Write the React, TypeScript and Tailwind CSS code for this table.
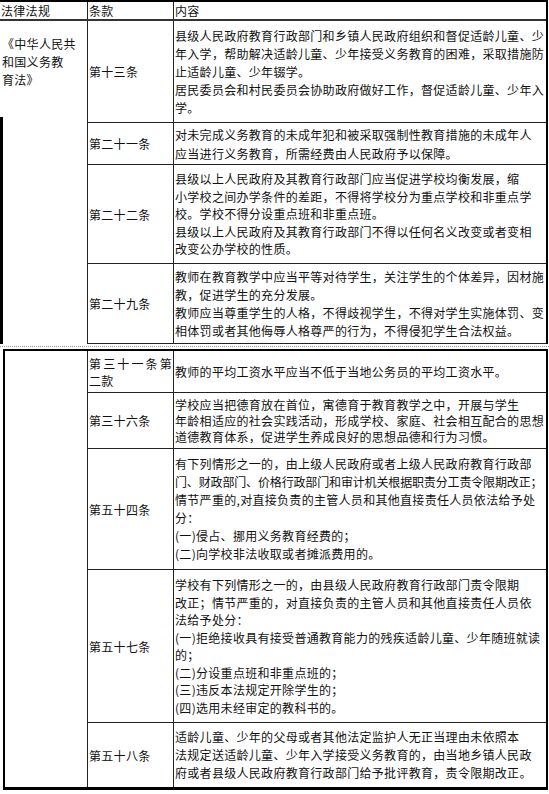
import React from "react";

type Line = string | { t: string; tight: true };

type RowData = {
  art: React.ReactNode;
  lines: Line[];
  h: string;
  lh: string;
  last?: boolean;
};

const topRows: RowData[] = [
  {
    art: "第十三条",
    h: "h-[102px]",
    lh: "leading-[18px]",
    lines: [
      "县级人民政府教育行政部门和乡镇人民政府组织和督促适龄儿童、少",
      "年入学，帮助解决适龄儿童、少年接受义务教育的困难，采取措施防",
      "止适龄儿童、少年辍学。",
      "居民委员会和村民委员会协助政府做好工作，督促适龄儿童、少年入",
      "学。",
    ],
  },
  {
    art: "第二十一条",
    h: "h-[42px]",
    lh: "leading-[19px]",
    lines: [
      "对未完成义务教育的未成年犯和被采取强制性教育措施的未成年人",
      "应当进行义务教育，所需经费由人民政府予以保障。",
    ],
  },
  {
    art: "第二十二条",
    h: "h-[99px]",
    lh: "leading-[17.5px]",
    lines: [
      "县级以上人民政府及其教育行政部门应当促进学校均衡发展，缩",
      "小学校之间办学条件的差距，不得将学校分为重点学校和非重点学",
      "校。学校不得分设重点班和非重点班。",
      "县级以上人民政府及其教育行政部门不得以任何名义改变或者变相",
      "改变公办学校的性质。",
    ],
  },
  {
    art: "第二十九条",
    h: "h-[80px]",
    lh: "leading-[18px]",
    lines: [
      "教师在教育教学中应当平等对待学生，关注学生的个体差异，因材施",
      "教，促进学生的充分发展。",
      "教师应当尊重学生的人格，不得歧视学生，不得对学生实施体罚、变",
      "相体罚或者其他侮辱人格尊严的行为，不得侵犯学生合法权益。",
    ],
  },
];

const bottomRows: RowData[] = [
  {
    art: (
      <div className="w-full">
        <div className="[text-align:justify] [text-align-last:justify] pr-[1px]">第三十一条第</div>
        <div>二款</div>
      </div>
    ),
    h: "h-[42px]",
    lh: "leading-[17px]",
    lines: ["教师的平均工资水平应当不低于当地公务员的平均工资水平。"],
  },
  {
    art: "第三十六条",
    h: "h-[56px]",
    lh: "leading-[16px]",
    lines: [
      "学校应当把德育放在首位，寓德育于教育教学之中，开展与学生",
      "年龄相适应的社会实践活动，形成学校、家庭、社会相互配合的思想",
      "道德教育体系，促进学生养成良好的思想品德和行为习惯。",
    ],
  },
  {
    art: "第五十四条",
    h: "h-[121px]",
    lh: "leading-[18px]",
    lines: [
      "有下列情形之一的，由上级人民政府或者上级人民政府教育行政部",
      { t: "门、财政部门、价格行政部门和审计机关根据职责分工责令限期改正；", tight: true },
      "情节严重的,对直接负责的主管人员和其他直接责任人员依法给予处",
      "分：",
      "(一)侵占、挪用义务教育经费的；",
      "(二)向学校非法收取或者摊派费用的。",
    ],
  },
  {
    art: "第五十七条",
    h: "h-[153px]",
    lh: "leading-[17.5px]",
    lines: [
      "学校有下列情形之一的，由县级人民政府教育行政部门责令限期",
      "改正；情节严重的，对直接负责的主管人员和其他直接责任人员依",
      "法给予处分：",
      "(一)拒绝接收具有接受普通教育能力的残疾适龄儿童、少年随班就读",
      "的；",
      "(二)分设重点班和非重点班的；",
      "(三)违反本法规定开除学生的；",
      "(四)选用未经审定的教科书的。",
    ],
  },
  {
    art: "第五十八条",
    h: "h-[64px]",
    lh: "leading-[18px]",
    last: true,
    lines: [
      "适龄儿童、少年的父母或者其他法定监护人无正当理由未依照本",
      "法规定送适龄儿童、少年入学接受义务教育的，由当地乡镇人民政",
      "府或者县级人民政府教育行政部门给予批评教育，责令限期改正。",
    ],
  },
];

function Row({ row }: { row: RowData }) {
  return (
    <div
      className={`flex ${row.h} ${row.last ? "" : "border-b border-[#222]"}`}
    >
      <div className="w-[86px] shrink-0 border-r border-[#222] flex items-center pl-[1px] leading-[17px] whitespace-nowrap">
        {row.art}
      </div>
      <div className={`flex-1 min-w-0 flex flex-col justify-center pl-[1px] ${row.lh}`}>
        {row.lines.map((l, i) =>
          typeof l === "string" ? (
            <div key={i} className="whitespace-nowrap">
              {l}
            </div>
          ) : (
            <div key={i} className="whitespace-nowrap tracking-[-0.15px]">
              {l.t}
            </div>
          )
        )}
      </div>
    </div>
  );
}

export default function App() {
  return (
    <div className="w-[549px] h-[794px] bg-white overflow-hidden text-[12px] tracking-[0.3px] text-[#111] font-['Noto_Sans_CJK_SC','Noto_Sans',sans-serif]">
      {/* top table */}
      <div className="w-[548px] border-t-2 border-r-2 border-black">
        <div className="flex h-[19px] border-b-2 border-[#333] leading-[17px]">
          <div className="w-[88px] shrink-0 border-r border-[#222] pl-[1px]">法律法规</div>
          <div className="w-[86px] shrink-0 border-r border-[#222] pl-[1px]">条款</div>
          <div className="flex-1 pl-[1px]">内容</div>
        </div>
        <div className="flex">
          <div className="w-[88px] shrink-0 border-r border-[#222] flex flex-col">
            <div className="h-[96px] pt-[14px] pl-[2px] leading-[18px]">
              <div>《中华人民共</div>
              <div>和国义务教</div>
              <div>育法》</div>
            </div>
            <div className="flex-1 border-l-[3px] border-black" />
          </div>
          <div className="flex-1 flex flex-col">
            {topRows.map((r, i) => (
              <Row key={i} row={r} />
            ))}
          </div>
        </div>
      </div>

      {/* separator */}
      <div className="h-[5px] flex items-center">
        <div className="w-full border-t border-dotted border-[#9a9a9a]" />
      </div>

      {/* bottom table */}
      <div className="ml-[3px] w-[545px] border-t-2 border-l-2 border-r-2 border-b-[3px] border-black flex">
        <div className="w-[83px] shrink-0 border-r border-[#222]" />
        <div className="flex-1 flex flex-col">
          {bottomRows.map((r, i) => (
            <Row key={i} row={r} />
          ))}
        </div>
      </div>
    </div>
  );
}
